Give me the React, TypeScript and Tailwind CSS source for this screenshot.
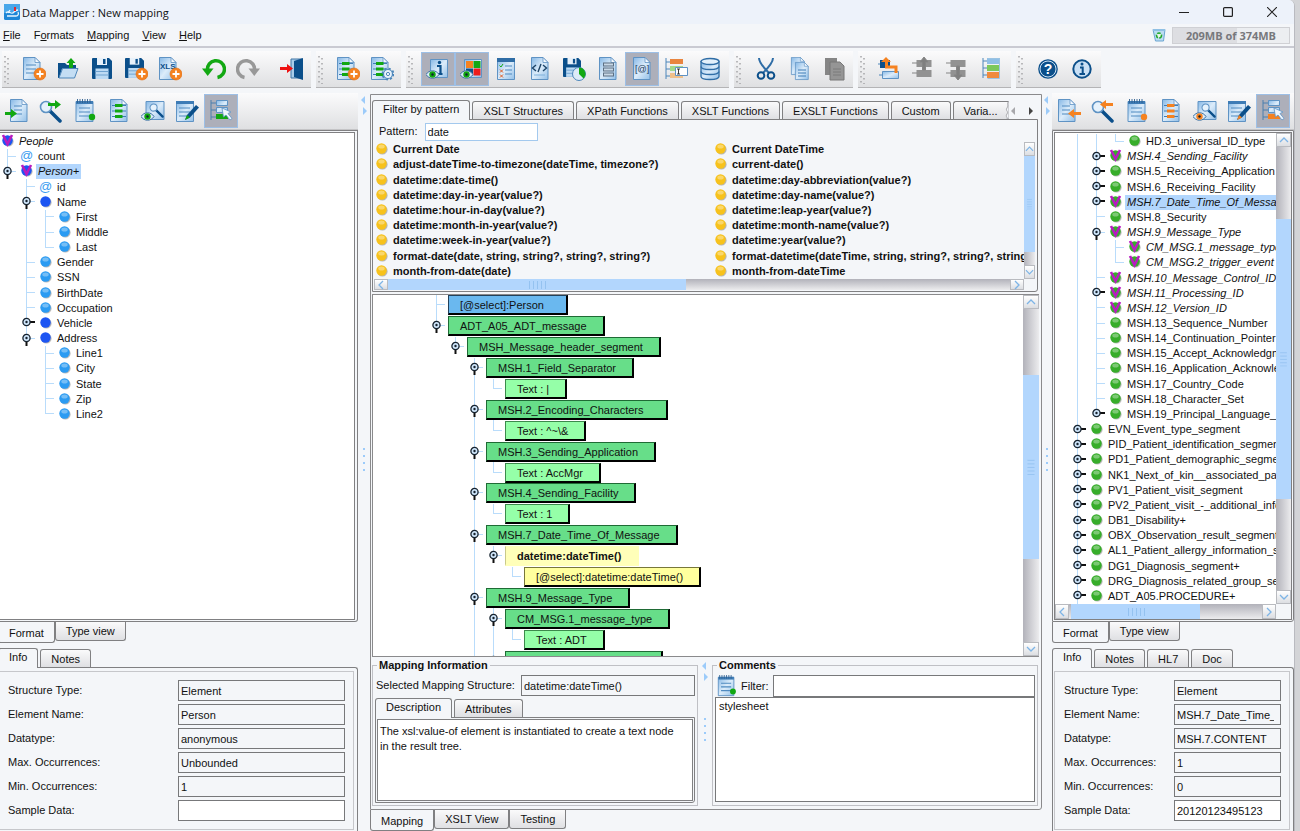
import React, { useState } from 'react';
import clsx from 'clsx';

const GREEN = '#12a812';
const ORANGE = '#f58220';
const NAVY = '#0b4f8a';

/* ---------- icon parts, all drawn on a 24x24 board ---------- */

const Sheet = ({ x = 1, y = 0 }: { x?: number; y?: number }) => (
  <g transform={`translate(${x} ${y})`}>
    <path d="M.5 .5H12l5 5V22.500H.5z" fill="url(#sheet)" stroke="#5f93c4" />
    <path d="M12 .5v5h5z" fill="#f4f9fe" stroke="#5f93c4" strokeWidth=".8" />
  </g>
);

const Lines = ({ x = 4, w = 10, from = 8 }: { x?: number; w?: number; from?: number }) => (
  <path d={`M${x} ${from}h${w}M${x} ${from + 4}h${w}M${x} ${from + 8}h${w}`} stroke="#4f8ac0" strokeWidth="1.200" />
);

const Plus = () => (
  <g>
    <circle cx="18" cy="17" r="6" fill={ORANGE} stroke="#e06c10" strokeWidth=".6" />
    <path d="M18 13.500v7M14.500 17h7" stroke="#fff" strokeWidth="1.800" />
  </g>
);

const Floppy = ({ x = 2, s = 1 }: { x?: number; s?: number }) => (
  <g transform={`translate(${x} 1) scale(${s})`}>
    <path d="M0 1a1 1 0 0 1 1-1h16l3 3v17a1 1 0 0 1-1 1H1a1 1 0 0 1-1-1z" fill={NAVY} />
    <path d="M5 0h10v7H5z" fill="#e8f2fb" />
    <path d="M11 1h2.500v5H11z" fill={NAVY} />
    <path d="M3.500 10.500h13V21h-13z" fill="#bcdaf3" />
    <path d="M3.500 13.500h13M3.500 17h13" stroke="#6fa3d0" />
  </g>
);

const Bars = ({ color }: { color: string }) => (
  <g>
    <path d="M3 6.500h14M3 12h14M3 17.500h14" stroke="#3e7cb6" strokeWidth="1" />
    <path d="M6 6.500h7.500M6 12h7.500M6 17.500h7.500" stroke={color} strokeWidth="3.200" />
  </g>
);

const Eye = ({ color }: { color: string }) => (
  <g>
    <path d="M0 17.500c3-5 10-5 13 0-3 5-10 5-13 0z" fill="#dcebf8" stroke="#3f74a5" />
    <circle cx="6.500" cy="17.500" r="3.200" fill={color} />
    <circle cx="6.500" cy="17.500" r="1.200" fill="#123" />
  </g>
);

const Pad = () => (
  <g>
    <path d="M3 2.500h17V22.500H3z" fill="url(#sheet)" stroke="#5f93c4" />
    <path d="M3 2h17v3H3z" fill="#3e7cb6" />
    <path d="M4.500 0v4M7 0v4M9.500 0v4M12 0v4M14.500 0v4M17 0v4" stroke="#2d5f8f" strokeWidth=".9" />
  </g>
);

const Lens = ({ x = 0, y = 0, s = 1 }: { x?: number; y?: number; s?: number }) => (
  <g transform={`translate(${x} ${y}) scale(${s})`}>
    <path d="M10.500 10.500L21 21" stroke={NAVY} strokeWidth="3.500" strokeLinecap="round" />
    <circle cx="7" cy="7" r="5.500" fill="#e6f2fc" stroke="#5f93c4" strokeWidth="1.600" />
  </g>
);

const Gear = () => (
  <g>
    <circle cx="18" cy="17" r="5.500" fill="none" stroke="#4c86ba" strokeWidth="1.800" strokeDasharray="2.200 2.100" />
    <circle cx="18" cy="17" r="4.500" fill="#e8f2fb" stroke="#4c86ba" strokeWidth="1.200" />
    <circle cx="18" cy="17" r="1.600" fill="#fff" stroke="#4c86ba" />
  </g>
);

const RightArrow = ({ x, y, color }: { x: number; y: number; color: string }) => (
  <path transform={`translate(${x} ${y})`} d="M0 3h7V0l6 4.500L7 9V6H0z" fill={color} />
);

const LeftArrow = ({ x, y, color }: { x: number; y: number; color: string }) => (
  <path transform={`translate(${x} ${y})`} d="M13 3H6V0L0 4.500 6 9V6h7z" fill={color} />
);

const sideIcons = (c: string, incoming: boolean): Record<string, React.ReactNode> => ({
  'Load format': incoming
    ? <><Sheet x={5} /><Lines x={9} w={8} from={7} /><RightArrow x={-1} y={10} color={c} /></>
    : <><Sheet x={1} /><Lines x={5} w={8} from={7} /><LeftArrow x={11} y={10} color={c} /></>,
  'Find node': <><Lens x={0} y={1} />{incoming ? <RightArrow x={9} y={1} color={c} /> : <LeftArrow x={9} y={1} color={c} />}</>,
  Comments: <><Pad /><Lines x={6} w={11} from={9} /><circle cx="19" cy="18" r="3.200" fill={c} /></>,
  'Mapped nodes': <><Sheet x={3} /><g transform="translate(2 0)"><Bars color={c} /></g></>,
  Preview: <><path d="M5 2.500h18v18H5z" fill="url(#sheet)" stroke="#5f93c4" /><Lens x={8} y={4} s={0.65} /><Eye color={c} /></>,
  'Edit format': <><path d="M1.500 2.500h17v20h-17z" fill="url(#sheet)" stroke="#5f93c4" /><path d="M1 2h18v3H1z" fill="#3e7cb6" /><Lines x={4} w={11} from={9} /><path d="M12 16L21 6l3 2.500-9 10-5 2.500z" fill={NAVY} /><path d="M12 16l3 2.500-5 2.500z" fill={c} /></>,
  'Select in tree': <><path d="M2 1v20M2 4h6M2 11h6M2 18h6" stroke="#4a7fae" fill="none" /><path d="M7.500 1.500h11v5h-11zM7.500 8.500h11v5h-11z" fill="url(#sheet)" stroke="#5f93c4" /><path d="M7 15h12v5H7z" fill={c} /><path d="M13 9l9 4-3 1.500 4 5-2 1.500-4-5-2.500 2z" fill="#eef6fd" stroke="#5f93c4" strokeWidth=".8" /></>,
});

const ICONS: Record<string, React.ReactNode> = {
  New: <><Sheet /><Lines /><Plus /></>,
  Open: <><path d="M2 6h7l2 2h9v4H6L3 21H2z" fill={NAVY} /><path d="M6.500 11.500H22L18.500 21H3z" fill="#c4def4" stroke="#4c86ba" /><path d="M15 1l4.500 5H17v5h-4V6h-2.500z" fill={GREEN} /></>,
  Save: <Floppy />,
  'Save as': <><Floppy x={1} s={0.95} /><Plus /></>,
  'Export XLS': <><Sheet /><text x="2" y="12" fontSize="8" fontWeight="700" fill={NAVY} fontFamily="Liberation Sans, sans-serif">XLS</text><Plus /></>,
  Undo: <><path d="M5.500 13a8.500 8.500 0 1 1 10 7.500" fill="none" stroke={GREEN} strokeWidth="3.500" /><path d="M0 11.500h11.500L5.700 19z" fill={GREEN} /></>,
  Redo: <><path d="M18.500 13a8.500 8.500 0 1 0-10 7.500" fill="none" stroke="#989898" strokeWidth="3.500" /><path d="M24 11.500H12.500L18.300 19z" fill="#989898" /></>,
  Exit: <><path d="M11 2h11v19H11z" fill="#a9cdea" stroke="#3f74a5" /><path d="M14 4l9-3v22l-9-3z" fill={NAVY} /><RightArrow x={0} y={7} color="#ee1111" /></>,
  'Add mapping': <><Sheet /><Bars color={GREEN} /><Plus /></>,
  'Mapping settings': <><Sheet /><Bars color={GREEN} /><Gear /></>,
  'Show info': <><path d="M4.500 2.500h17v18h-17z" fill="url(#sheet)" stroke="#5f93c4" /><path d="M11 9h3.500v8M10 17h6.500" stroke={NAVY} strokeWidth="2.200" fill="none" /><circle cx="13.500" cy="5.500" r="1.700" fill={NAVY} /><Eye color={GREEN} /></>,
  'Show colours': <><path d="M4.500 2.500h17v18h-17z" fill="url(#sheet)" stroke="#5f93c4" /><path d="M6 4h7v7H6z" fill={ORANGE} /><path d="M13.500 4h7v7h-7z" fill={GREEN} /><path d="M6 11.500h7v7H6z" fill={NAVY} /><path d="M13.500 11.500h7v7h-7z" fill="#ee1c1c" /><Eye color={GREEN} /></>,
  Checklist: <><path d="M3.500 1.500h17v21h-17z" fill="url(#sheet)" stroke="#5f93c4" /><path d="M3 1h18v4H3z" fill="#2f6da6" /><path d="M5.500 8.500l1.500 1.500 2-3" stroke={GREEN} fill="none" /><path d="M6 12.500l3 3m0-3l-3 3M6 17.500l3 3m0-3l-3 3" stroke="#e05a20" /><Lines x={11} w={7} from={9} /></>,
  'XML source': <><Sheet x={3} /><path d="M8 8l-3.500 3L8 14M15 8l3.500 3L15 14M13 7l-3 8" fill="none" stroke="#1d4468" strokeWidth="1.400" /><path d="M6 18h11" stroke="#7fb0da" /></>,
  'Auto save': <><Floppy x={1} s={0.9} /><circle cx="17" cy="17" r="6.500" fill="#dcebf8" stroke="#4c86ba" /><path d="M17 17V10.500a6.500 6.500 0 0 1 4.600 11z" fill={GREEN} /></>,
  'Form view': <><Sheet x={3} /><path d="M7 7.500h11M7 12.500h11M7 17.500h11" stroke="#5c6f82" strokeWidth="4" /><path d="M8 7.500h9M8 12.500h9M8 17.500h9" stroke="#c8d8e6" strokeWidth="2" /></>,
  Attributes: <><Sheet x={3} /><text x="5" y="15" fontSize="9" fill="#1d3c5c" fontFamily="Liberation Sans, sans-serif">[@]</text></>,
  Rename: <><path d="M2 1v21M2 5h5M2 12h5M2 19h5" stroke="#4c86ba" fill="none" /><path d="M6 2h13v5H6z" fill="#e9853f" /><path d="M6 9h13v5H6z" fill="#a4d98c" /><path d="M6 16h13v5H6z" fill="#f0c08a" /><path d="M11.500 10.500h12v8h-12z" fill="#fff" stroke="#5f93c4" /><path d="M13 12h3m-3 5h3m-1.500-5v5" stroke="#222" strokeWidth=".9" /></>,
  Database: <><path d="M3 4.500v15c0 4 18 4 18 0v-15z" fill="url(#sheet)" stroke="#2f6da6" strokeWidth="1.300" /><ellipse cx="12" cy="4.500" rx="9" ry="3" fill="#e3f0fb" stroke="#2f6da6" strokeWidth="1.300" /><path d="M3 9.500c0 4 18 4 18 0M3 14.500c0 4 18 4 18 0" fill="none" stroke="#2f6da6" strokeWidth="1.300" /></>,
  Cut: <><path d="M5 1c0 4 4 9 10 15M19 1c0 4-4 9-10 15" stroke="#2f6da6" strokeWidth="2" fill="none" /><circle cx="7" cy="18.500" r="3.300" fill="none" stroke={NAVY} strokeWidth="2" /><circle cx="17" cy="18.500" r="3.300" fill="none" stroke={NAVY} strokeWidth="2" /></>,
  Copy: <><g transform="translate(3 0) scale(.78)"><Sheet x={0} /></g><g transform="translate(7 5) scale(.78)"><Sheet x={0} /></g><path d="M10 13h8M10 16h8M10 19h8" stroke="#3e7cb6" /></>,
  Paste: <><path d="M3 1h12v17H3z" fill="#858585" /><path d="M8 5h10l4 4v14H8z" fill="#959595" stroke="#777" /><path d="M11 12h8M11 15h8M11 18h8" stroke="#7b7b7b" /></>,
  'Move out': <><path d="M2 3h10v8H2z" fill={NAVY} /><path d="M4.500 14.500h16v7h-16z" fill="url(#sheet)" stroke="#5f93c4" /><path d="M0 7h2M1 18h3.500" stroke="#4c86ba" /><path d="M8 0l5 5h-3v3.500h9.500V16h-3v-4.500H7V5H3z" fill={ORANGE} /></>,
  'Move up': <><path d="M4.500 3h15v7h-15zM4.500 13h15v7h-15z" fill="#929292" /><path d="M12 0l4 5h-2.500v8h-3V5H8zM0 6h5M0 16h5" fill="#7f7f7f" stroke="#858585" /></>,
  'Move down': <><path d="M4.500 3h15v7h-15zM4.500 13h15v7h-15z" fill="#929292" /><path d="M12 23l4-5h-2.500V9h-3v9H8zM0 6h5M0 16h5" fill="#7f7f7f" stroke="#858585" /></>,
  'Tree colours': <><path d="M3 1v20M3 4h5M3 11h5M3 18h5" stroke="#4c86ba" fill="none" /><path d="M7 1h13v6H7z" fill="#8fbfe6" /><path d="M7 8h13v6H7z" fill="#7cc85c" /><path d="M7 15h13v6H7z" fill="#f08a3c" /><path d="M7.500 1.500h12v20h-12" fill="none" stroke="#9cc3e2" /></>,
  Help: <><circle cx="12" cy="12" r="9.800" fill={NAVY} /><circle cx="12" cy="12" r="8" fill="none" stroke="#cfe3f5" /><text x="12" y="17" textAnchor="middle" fontSize="14" fontWeight="700" fill="#fff" fontFamily="Liberation Sans, sans-serif">?</text></>,
  About: <><circle cx="12" cy="12" r="8.700" fill="#c9e0f5" stroke={NAVY} strokeWidth="2" /><path d="M10 10.500h2.700V17M9.500 17h5.500" stroke={NAVY} strokeWidth="2" fill="none" /><circle cx="12" cy="7" r="1.500" fill={NAVY} /></>,
};

const TOOLBARS: { items: string[]; pressed?: string[] }[] = [
  { items: ['New', 'Open', 'Save', 'Save as', 'Export XLS', '-', 'Undo', 'Redo', '-', 'Exit'] },
  { items: ['Add mapping', 'Mapping settings'] },
  {
    items: ['Show info', 'Show colours', 'Checklist', 'XML source', 'Auto save', 'Form view', 'Attributes', 'Rename', 'Database'],
    pressed: ['Show info', 'Show colours', 'Attributes'],
  },
  { items: ['Cut', 'Copy', 'Paste'] },
  { items: ['Move out', 'Move up', 'Move down', 'Tree colours'] },
  { items: ['Help', 'About'] },
];

function ToolButton({ label, icon, pressed }: { label: string; icon: React.ReactNode; pressed?: boolean }) {
  return (
    <button
      aria-label={label}
      className={clsx('w-[34px] h-[34px] shrink-0 flex items-center justify-center border', pressed ? 'bg-[#adafba] border-[#9dbfe6]' : 'border-transparent')}
    >
      <svg viewBox="0 0 24 24" className="w-6 h-6">{icon}</svg>
    </button>
  );
}

function MainToolbars() {
  return (
    <div className="flex gap-[5px] pl-0.5 pt-[3px] pb-1">
      {TOOLBARS.map((bar, i) => (
        <div key={i} className="flex py-px pr-0.5 border-b border-[#b4b4b6] bg-linear-to-b from-[#fbfbfc] to-[#dfe0e2]">
          <svg viewBox="0 0 15 34" className="w-[15px] h-[34px]">
            <path d="M3 4v28M6 6v26" stroke="#a5a5a8" strokeWidth="1.500" strokeDasharray="1.500 3.500" />
          </svg>
          {bar.items.map((name, n) =>
            name === '-' ? <span key={n} className="w-2.5" /> : <ToolButton key={n} label={name} icon={ICONS[name]} pressed={bar.pressed?.includes(name)} />
          )}
        </div>
      ))}
    </div>
  );
}

function SideToolbar({ color, incoming }: { color: string; incoming: boolean }) {
  return (
    <div className="flex shrink-0 py-px border-b border-[#c4c4c6] overflow-hidden bg-linear-to-b from-[#fbfbfc] to-[#dfe0e2]">
      {Object.entries(sideIcons(color, incoming)).map(([name, icon]) => (
        <ToolButton key={name} label={name} icon={icon} pressed={name === 'Select in tree'} />
      ))}
    </div>
  );
}

/* ---------- trees ---------- */

// One guide character per indent level: | passes through, + branches, L ends, blank is empty.
type Handle = 'open' | 'closed' | null;
type Kind = 'attr' | 'blue' | 'leaf' | 'green' | 'markBlue' | 'markGreen';
type TreeRow = { guides: string; handle?: Handle; kind: Kind; label: string; selected?: boolean };

function HandleIcon({ state }: { state: Handle }) {
  return (
    <svg viewBox="0 0 19 14" className="absolute left-0 inset-y-0 my-auto w-[19px] h-3.5">
      <path d={state === 'open' ? 'M9.500 8v6' : 'M12 6h6'} stroke="#111" strokeWidth="2" />
      <circle cx="9.500" cy="6" r="3.600" fill="#cfe6fb" stroke="#16222e" strokeWidth="1.300" />
      <circle cx="9.500" cy="6" r="1.200" fill="#16222e" />
    </svg>
  );
}

function Guides({ guides, handle }: { guides: string; handle?: Handle }) {
  return (
    <>
      {guides.split('').map((g, i) => (
        <span key={i} className="relative w-[19px] shrink-0 self-stretch">
          {g !== ' ' && <span className={clsx('absolute left-[9px] top-0 w-px bg-[#b9dcfb]', g === 'L' ? 'h-1/2' : 'h-full')} />}
          {(g === '+' || g === 'L') && <span className="absolute left-[9px] top-[calc(50%-1px)] h-px w-[9px] bg-[#b9dcfb]" />}
          {handle && i === guides.length - 1 && <HandleIcon state={handle} />}
        </span>
      ))}
    </>
  );
}

const BALL: Record<string, string> = { blue: '#1d55f2', leaf: '#2b9bf2', green: '#37ad2a', gold: '#f7c21c' };

function Ball({ color, shine = true }: { color: string; shine?: boolean }) {
  return (
    <g>
      <circle cx="7.400" cy="7.400" r="5.200" fill="#8c8c8c" opacity=".6" />
      <circle cx="6.500" cy="6.500" r="5.200" fill={color} />
      {shine && <ellipse cx="6.500" cy="4.500" rx="3.200" ry="2" fill="#fff" opacity=".35" />}
    </g>
  );
}

function NodeIcon({ kind }: { kind: Kind }) {
  if (kind === 'attr') {
    return <span aria-hidden="true" className="w-[19px] shrink-0 text-center text-[13px] leading-[13px] text-[#3b9cf0] mb-0.5">@</span>;
  }
  const marked = kind === 'markBlue' || kind === 'markGreen';
  return (
    <svg viewBox="0 0 13 13" className="w-[13px] h-[13px] mx-[3px] shrink-0 mb-0.5">
      <Ball color={kind === 'markBlue' ? BALL.blue : kind === 'markGreen' ? BALL.green : BALL[kind]} shine={kind !== 'blue' && !marked} />
      {marked && <path d="M2 1l4.500 9L11 1" fill="none" stroke="#b81cc0" strokeWidth="2.600" />}
    </svg>
  );
}

function Tree({ rows, className }: { rows: TreeRow[]; className: string }) {
  return (
    <ul className={clsx('grid auto-rows-fr', className)}>
      {rows.map((row, i) => (
        <li key={i} className="flex items-center whitespace-nowrap">
          <Guides guides={row.guides} handle={row.handle} />
          <NodeIcon kind={row.kind} />
          <span className={clsx('px-0.5 leading-[15px]', row.kind.startsWith('mark') && 'italic', row.selected && 'bg-[#b2d6fd]')}>{row.label}</span>
        </li>
      ))}
    </ul>
  );
}

const SOURCE: TreeRow[] = [
  { guides: '', kind: 'markBlue', label: 'People' },
  { guides: '+', kind: 'attr', label: 'count' },
  { guides: 'L', handle: 'open', kind: 'markBlue', label: 'Person+', selected: true },
  { guides: ' +', kind: 'attr', label: 'id' },
  { guides: ' +', handle: 'open', kind: 'blue', label: 'Name' },
  { guides: ' |+', kind: 'leaf', label: 'First' },
  { guides: ' |+', kind: 'leaf', label: 'Middle' },
  { guides: ' |L', kind: 'leaf', label: 'Last' },
  { guides: ' +', kind: 'leaf', label: 'Gender' },
  { guides: ' +', kind: 'leaf', label: 'SSN' },
  { guides: ' +', kind: 'leaf', label: 'BirthDate' },
  { guides: ' +', kind: 'leaf', label: 'Occupation' },
  { guides: ' +', handle: 'closed', kind: 'blue', label: 'Vehicle' },
  { guides: ' L', handle: 'open', kind: 'blue', label: 'Address' },
  { guides: '  +', kind: 'leaf', label: 'Line1' },
  { guides: '  +', kind: 'leaf', label: 'City' },
  { guides: '  +', kind: 'leaf', label: 'State' },
  { guides: '  +', kind: 'leaf', label: 'Zip' },
  { guides: '  L', kind: 'leaf', label: 'Line2' },
];

const segment = (label: string): TreeRow => ({ guides: '+', handle: 'closed', kind: 'green', label });

const TARGET: TreeRow[] = [
  { guides: '||L', kind: 'green', label: 'HD.3_universal_ID_type' },
  { guides: '|+', handle: 'closed', kind: 'markGreen', label: 'MSH.4_Sending_Facility' },
  { guides: '|+', handle: 'closed', kind: 'green', label: 'MSH.5_Receiving_Application' },
  { guides: '|+', handle: 'closed', kind: 'green', label: 'MSH.6_Receiving_Facility' },
  { guides: '|+', handle: 'closed', kind: 'markGreen', label: 'MSH.7_Date_Time_Of_Message', selected: true },
  { guides: '|+', kind: 'green', label: 'MSH.8_Security' },
  { guides: '|+', handle: 'open', kind: 'markGreen', label: 'MSH.9_Message_Type' },
  { guides: '||+', kind: 'markGreen', label: 'CM_MSG.1_message_type' },
  { guides: '||L', kind: 'markGreen', label: 'CM_MSG.2_trigger_event' },
  { guides: '|+', kind: 'markGreen', label: 'MSH.10_Message_Control_ID' },
  { guides: '|+', handle: 'closed', kind: 'markGreen', label: 'MSH.11_Processing_ID' },
  { guides: '|+', kind: 'markGreen', label: 'MSH.12_Version_ID' },
  { guides: '|+', kind: 'green', label: 'MSH.13_Sequence_Number' },
  { guides: '|+', kind: 'green', label: 'MSH.14_Continuation_Pointer' },
  { guides: '|+', kind: 'green', label: 'MSH.15_Accept_Acknowledgment' },
  { guides: '|+', kind: 'green', label: 'MSH.16_Application_Acknowledgment' },
  { guides: '|+', kind: 'green', label: 'MSH.17_Country_Code' },
  { guides: '|+', kind: 'green', label: 'MSH.18_Character_Set' },
  { guides: '|L', handle: 'closed', kind: 'green', label: 'MSH.19_Principal_Language_Of_Message' },
  segment('EVN_Event_type_segment'),
  segment('PID_Patient_identification_segment'),
  segment('PD1_Patient_demographic_segment'),
  segment('NK1_Next_of_kin__associated_parties'),
  segment('PV1_Patient_visit_segment'),
  segment('PV2_Patient_visit_-_additional_info'),
  segment('DB1_Disability+'),
  segment('OBX_Observation_result_segment'),
  segment('AL1_Patient_allergy_information_segment'),
  segment('DG1_Diagnosis_segment+'),
  segment('DRG_Diagnosis_related_group_segment'),
  segment('ADT_A05.PROCEDURE+'),
];

/* ---------- mapping canvas ---------- */

type BoxTone = 'select' | 'element' | 'text' | 'value' | 'valueSelect';
type MapRow = { guides: string; handle?: Handle; tone: BoxTone; label: string; wide?: boolean };

const TONES: Record<BoxTone, string> = {
  select: 'bg-[#6ab8ef] border-[#23415a] border-r-black border-b-black',
  element: 'bg-[#67de89] border-[#1f6b35] border-r-black border-b-black',
  text: 'bg-[#95ffa8] border-[#3c8a4c] border-r-black border-b-black',
  value: 'bg-[#ffffb9] border-transparent border-l-[#c9c98a] font-bold',
  valueSelect: 'bg-[#ffff9e] border-[#77773a] border-r-black border-b-black',
};

const MAPPING: MapRow[] = [
  { guides: '+', tone: 'select', label: '[@select]:Person', wide: true },
  { guides: 'L', handle: 'open', tone: 'element', label: 'ADT_A05_ADT_message' },
  { guides: ' L', handle: 'open', tone: 'element', label: 'MSH_Message_header_segment' },
  { guides: '  +', handle: 'open', tone: 'element', label: 'MSH.1_Field_Separator' },
  { guides: '  |L', tone: 'text', label: 'Text : |' },
  { guides: '  +', handle: 'open', tone: 'element', label: 'MSH.2_Encoding_Characters', wide: true },
  { guides: '  |L', tone: 'text', label: 'Text : ^~\\&' },
  { guides: '  +', handle: 'open', tone: 'element', label: 'MSH.3_Sending_Application' },
  { guides: '  |L', tone: 'text', label: 'Text : AccMgr' },
  { guides: '  +', handle: 'open', tone: 'element', label: 'MSH.4_Sending_Facility' },
  { guides: '  |L', tone: 'text', label: 'Text : 1' },
  { guides: '  +', handle: 'open', tone: 'element', label: 'MSH.7_Date_Time_Of_Message' },
  { guides: '  |L', handle: 'open', tone: 'value', label: 'datetime:dateTime()' },
  { guides: '  | L', tone: 'valueSelect', label: '[@select]:datetime:dateTime()' },
  { guides: '  +', handle: 'open', tone: 'element', label: 'MSH.9_Message_Type' },
  { guides: '  |+', handle: 'open', tone: 'element', label: 'CM_MSG.1_message_type' },
  { guides: '  ||L', tone: 'text', label: 'Text : ADT' },
  { guides: '  |+', handle: 'open', tone: 'element', label: '' },
];

function MappingCanvas() {
  return (
    <div className="flex flex-1 min-h-0 bg-white border-t border-l border-b border-[#8a8a8c] mr-0.5">
      <div className="flex-1 min-w-0 overflow-hidden pl-[54px]">
        <ul className="grid auto-rows-fr h-94">
          {MAPPING.map((row, i) => (
            <li key={i} className="flex items-center whitespace-nowrap">
              <Guides guides={row.guides} handle={row.handle} />
              <span
                className={clsx(
                  'ml-0.5 h-5 leading-[19px] border border-r-2 border-b-2 pl-[11px]',
                  row.wide ? 'pr-[22px]' : 'pr-4',
                  !row.label && 'w-[158px]',
                  TONES[row.tone]
                )}
              >
                {row.label}
              </span>
            </li>
          ))}
        </ul>
      </div>
      <ScrollBar className="w-4" before={66} thumb={185} after={84} />
    </div>
  );
}

/* ---------- shared widgets ---------- */

type ScrollProps = { horizontal?: boolean; className: string; before: number; thumb: number; after: number };

function ScrollBar({ horizontal, className, before, thumb, after }: ScrollProps) {
  const button = clsx('shrink-0 flex items-center justify-center border border-[#b9bbc0] bg-linear-to-b from-white to-[#dcdee2]', horizontal ? 'w-3.5' : 'h-3.5');
  const track = clsx('basis-0', horizontal ? 'bg-linear-to-b from-[#b2b2ba] to-[#ececee]' : 'bg-linear-to-r from-[#b2b2ba] to-[#ececee]');
  return (
    <div className={clsx('flex shrink-0', !horizontal && 'flex-col', className)}>
      <button aria-label="Scroll back" className={button}>
        <svg viewBox="0 0 10 10" className="w-2.5 h-2.5"><path d={horizontal ? 'M7 1L3 5l4 4' : 'M1 7l4-4 4 4'} fill="none" stroke="#7db4e6" strokeWidth="1.300" /></svg>
      </button>
      <div className={track} style={{ flexGrow: before }} />
      <div className="basis-0 bg-[#b2d6fd] flex items-center justify-center" style={{ flexGrow: thumb }}>
        <svg viewBox="0 0 18 8" className={clsx('w-[18px] h-2', !horizontal && 'rotate-90')}><path d="M1.500 0v8M5.500 0v8M9.500 0v8M13.500 0v8M17.500 0v8" stroke="#94c2f0" /></svg>
      </div>
      <div className={track} style={{ flexGrow: after }} />
      <button aria-label="Scroll forward" className={button}>
        <svg viewBox="0 0 10 10" className="w-2.5 h-2.5"><path d={horizontal ? 'M3 1l4 4-4 4' : 'M1 3l4 4 4-4'} fill="none" stroke="#7db4e6" strokeWidth="1.300" /></svg>
      </button>
    </div>
  );
}

type TabsProps = { tabs: string[]; bottom?: boolean; torn?: boolean; className?: string; children?: React.ReactNode };

function Tabs({ tabs, bottom, torn, className, children }: TabsProps) {
  const [active, setActive] = useState(tabs[0]);
  return (
    <div role="tablist" className={clsx('flex shrink-0 relative z-10', bottom ? 'items-start' : 'items-end gap-0.5', className)}>
      {tabs.map((tab, i) => (
        <button
          key={tab}
          role="tab"
          aria-selected={tab === active}
          onClick={() => setActive(tab)}
          className={clsx(
            'relative px-2.5 border border-[#808082] whitespace-nowrap',
            bottom ? 'rounded-b-[3px] border-t-0' : 'rounded-t-[3px] border-b-0',
            tab === active && 'bg-[#f4f6f9]',
            tab !== active && 'bg-linear-to-b from-[#fafafb] to-[#dfe0e3]',
            tab === active && (bottom ? 'h-[21px] pt-0.5' : 'h-5 -mb-px pb-0.5'),
            tab !== active && (bottom ? 'h-[19px]' : 'h-[18px] pt-0.5'),
            torn && i === tabs.length - 1 && 'border-r-0 rounded-tr-none'
          )}
        >
          {tab}
          {torn && i === tabs.length - 1 && (
            <svg viewBox="0 0 4 18" className="absolute -right-px -top-px w-1 h-[18px]"><path d="M4 0C1 3 4 4 2 7s2 3 0 6 1 3 0 5h2z" fill="#f4f6f9" stroke="#9a9a9e" strokeWidth=".8" /></svg>
          )}
        </button>
      ))}
      {children}
    </div>
  );
}

function Splitter({ className }: { className: string }) {
  return (
    <div className={clsx('shrink-0 relative flex flex-col items-center', className)}>
      <svg viewBox="0 0 8 20" className="w-2 h-5 mt-1"><path d="M5 0v8L1 4zM3 11v8l4-4z" fill="#9ccbfa" /></svg>
      <svg viewBox="0 0 4 30" className="absolute inset-y-0 my-auto w-1 h-[30px]"><path d="M2 1v28" stroke="#9ccbfa" strokeWidth="2" strokeDasharray="2 5" /></svg>
    </div>
  );
}

function InfoForm({ id, values, className }: { id: string; values: string[]; className: string }) {
  const labels = ['Structure Type:', 'Element Name:', 'Datatype:', 'Max. Occurrences:', 'Min. Occurrences:', 'Sample Data:'];
  return (
    <form className={clsx('flex flex-col gap-[3px] border border-[#c6c7cb] pt-2 pb-2', className)}>
      {labels.map((label, i) => (
        <div key={label} className="flex items-center">
          <label htmlFor={`${id}-${i}`} className={clsx('shrink-0', id === 'source' ? 'w-[170px]' : 'w-[110px]')}>{label}</label>
          <input
            id={`${id}-${i}`}
            readOnly={i < 5}
            defaultValue={values[i]}
            className={clsx('flex-1 min-w-0 h-[21px] border border-[#77787a] pl-0.5 pr-1.5 outline-none', i < 5 ? 'bg-[#f4f6f9]' : 'bg-white')}
          />
        </div>
      ))}
    </form>
  );
}

/* ---------- function palette ---------- */

const FUNCTIONS = [
  'Current Date', 'Current DateTime',
  'adjust-dateTime-to-timezone(dateTime, timezone?)', 'current-date()',
  'datetime:date-time()', 'datetime:day-abbreviation(value?)',
  'datetime:day-in-year(value?)', 'datetime:day-name(value?)',
  'datetime:hour-in-day(value?)', 'datetime:leap-year(value?)',
  'datetime:month-in-year(value?)', 'datetime:month-name(value?)',
  'datetime:week-in-year(value?)', 'datetime:year(value?)',
  'format-date(date, string, string?, string?, string?)', 'format-datetime(dateTime, string, string?, string?, string?)',
  'month-from-date(date)', 'month-from-dateTime',
];

function FunctionPalette() {
  return (
    <div className="shrink-0 pt-[5px] mr-[3px]">
      <Tabs torn tabs={['Filter by pattern', 'XSLT Structures', 'XPath Functions', 'XSLT Functions', 'EXSLT Functions', 'Custom', 'Varia...']}>
        <button aria-label="Previous tabs" className="ml-auto h-4 w-4 flex items-center"><svg viewBox="0 0 6 8" className="w-1.5 h-2"><path d="M5 0v8L1 4z" fill="#a8a8ac" /></svg></button>
        <button aria-label="Next tabs" className="h-4 w-2.5 flex items-center"><svg viewBox="0 0 6 8" className="w-1.5 h-2"><path d="M1 0v8l4-4z" fill="#444" /></svg></button>
      </Tabs>
      <div className="border border-[#808082] rounded-br-[3px] p-px">
        <div className="flex items-center gap-[7px] pl-[5px] h-[21px]">
          <label htmlFor="pattern">Pattern:</label>
          <input id="pattern" defaultValue="date" className="w-[113px] h-[18px] border border-[#a3c9ee] bg-white px-0.5 outline-none" />
        </div>
        <div className="flex h-[137px]">
          <ul className="flex-1 min-w-0 overflow-hidden grid grid-cols-[339px_1fr] auto-rows-fr font-bold">
            {FUNCTIONS.map(fn => (
              <li key={fn} className="flex items-center gap-[5px] min-w-0 whitespace-nowrap pl-px">
                <svg viewBox="0 0 13 13" className="w-[13px] h-[13px] shrink-0 mb-0.5"><Ball color={BALL.gold} /></svg>
                <span className="leading-[15px]">{fn}</span>
              </li>
            ))}
          </ul>
          <ScrollBar className="w-[11px] mr-px" before={0} thumb={96} after={13} />
        </div>
        <ScrollBar horizontal className="h-[11px] mr-3" before={0} thumb={298} after={324} />
      </div>
    </div>
  );
}

function MappingInfo() {
  return (
    <div className="flex shrink-0 h-[152px] pt-px pb-[3px] mr-[3px]">
      <fieldset className="flex-1 min-w-0 border border-[#bfc0c5] px-0.5 pb-0.5">
        <legend className="font-bold leading-[15px] ml-0.5 px-0.5">Mapping Information</legend>
        <div className="flex flex-col h-full pt-0.5">
          <div className="flex items-center pl-px">
            <label htmlFor="structure" className="w-[145px] whitespace-nowrap">Selected Mapping Structure:</label>
            <input id="structure" readOnly defaultValue="datetime:dateTime()" className="flex-1 min-w-0 h-[21px] border border-[#77787a] bg-[#f4f6f9] px-0.5 outline-none" />
          </div>
          <Tabs tabs={['Description', 'Attributes']} className="mt-0.5" />
          <div className="flex flex-1 min-h-0 border border-[#808082] rounded-br-[3px] p-px">
            <textarea
              aria-label="Description"
              readOnly
              className="flex-1 resize-none border border-[#808082] bg-white pl-0.5 pr-4 py-1 leading-[15px] outline-none"
              defaultValue="The xsl:value-of element is instantiated to create a text node in the result tree."
            />
          </div>
        </div>
      </fieldset>
      <Splitter className="w-3.5" />
      <fieldset className="flex-1 min-w-0 border border-[#bfc0c5] px-0.5 pb-[3px]">
        <legend className="font-bold leading-[15px] ml-0.5 px-0.5">Comments</legend>
        <div className="flex flex-col h-full pt-0.5">
          <div className="flex items-center gap-1 pl-0.5">
            <svg viewBox="2 0 21 24" className="w-5 h-[22px]"><Pad /><Lines x={6} w={11} from={9} /><circle cx="19" cy="18" r="3.200" fill={GREEN} /></svg>
            <label htmlFor="comment-filter">Filter:</label>
            <input id="comment-filter" className="flex-1 min-w-0 h-[22px] border border-[#77787a] bg-white px-0.5 outline-none" />
          </div>
          <ul className="flex-1 min-h-0 border border-[#77787a] bg-white px-[3px] py-px">
            <li className="leading-[15px]">stylesheet</li>
          </ul>
        </div>
      </fieldset>
    </div>
  );
}

function TitleBar() {
  return (
    <header className="shrink-0 bg-[#edf2fa]">
      <div className="flex items-center h-6 pl-1">
        <svg viewBox="0 0 16 16" className="w-4 h-4 mr-[2px]">
          <rect width="16" height="16" rx="1.500" fill="#1f86d6" />
          <path d="M0 0h16v7L0 9z" fill="#49a7ea" />
          <path d="M2 9c3-4 5 3 8-1 1-1 2-2 4-2M3 12h9c2 0 3-2 2-4M6 6l-2 3" stroke="#eaf6ff" strokeWidth="1.300" fill="none" />
          <path d="M10 3h2v4h-2z" fill="#e3272c" />
        </svg>
        <h1 className="font-['Open_Sans',sans-serif] text-[11px]">Data Mapper : New mapping</h1>
        <div className="ml-auto flex">
          <button aria-label="Minimize" className="w-11 h-6 flex items-center justify-center"><svg viewBox="0 0 10 10" className="w-2.5 h-2.5"><path d="M0 5.500h10" stroke="#222" /></svg></button>
          <button aria-label="Maximize" className="w-11 h-6 flex items-center justify-center"><svg viewBox="0 0 10 10" className="w-2.5 h-2.5"><rect x=".6" y=".6" width="8.800" height="8.800" rx="1" fill="none" stroke="#222" strokeWidth="1.200" /></svg></button>
          <button aria-label="Close" className="w-11 h-6 flex items-center justify-center"><svg viewBox="0 0 10 10" className="w-2.5 h-2.5"><path d="M0 0l10 10M10 0L0 10" stroke="#222" strokeWidth="1.100" /></svg></button>
        </div>
      </div>
      <div className="flex items-center h-6 pl-[3px] pr-1 bg-[#f4f6f9] border-b-2 border-[#c9cad2]">
        <nav className="flex gap-[13px]">
          <button><u>F</u>ile</button>
          <button>F<u>o</u>rmats</button>
          <button><u>M</u>apping</button>
          <button><u>V</u>iew</button>
          <button><u>H</u>elp</button>
        </nav>
        <button aria-label="Collect garbage" className="ml-auto mr-1.5">
          <svg viewBox="0 0 14 14" className="w-3.5 h-3.5">
            <path d="M1 1.500h12L11.500 13h-8z" fill="#bcdcf2" stroke="#6aa5d2" />
            <path d="M1 1h12v2H1z" fill="#8fc0e4" />
            <circle cx="7" cy="7.500" r="2.500" fill="#eaf6ee" stroke="#23a82c" strokeWidth="1.600" strokeDasharray="3.600 1.200" />
          </svg>
        </button>
        <div className="w-[118px] h-[17px] border border-[#cfd0d4] bg-linear-to-r from-[#dddee2] from-55% to-[#eceef1] to-55% text-center font-bold leading-[15px] text-[#77787c] font-['Open_Sans',sans-serif]">209MB of 374MB</div>
      </div>
    </header>
  );
}

export default function App() {
  return (
    <div className="flex h-screen overflow-hidden bg-[#d3d4d7] font-['Liberation_Sans',Arial,sans-serif] text-[11px] leading-[15px] text-[#111]">
      <svg className="absolute w-0 h-0" aria-hidden="true">
        <defs>
          <linearGradient id="sheet" x1="0" y1="0" x2="1" y2="1">
            <stop offset="0" stopColor="#86b8e6" />
            <stop offset=".5" stopColor="#dcecfa" />
            <stop offset="1" stopColor="#93c0e8" />
          </linearGradient>
        </defs>
      </svg>
      <div className="flex flex-col flex-1 min-w-0 mr-[5px] bg-[#f4f6f9] rounded-tr-md border-r border-[#b9bac0] overflow-hidden">
        <TitleBar />
        <MainToolbars />
        <main className="flex flex-1 min-h-0">
          {/* Source format */}
          <section className="w-[358px] shrink-0 flex flex-col pt-px">
            <SideToolbar color={GREEN} incoming />
            <div className="flex-1 min-h-0 border border-l-0 border-[#808082] rounded-br-[3px] pt-px pb-px pr-0.5">
              <div className="h-full bg-white border border-l-0 border-[#808082] overflow-hidden pt-px">
                <div className="-ml-0.5 w-fit"><Tree rows={SOURCE} className="h-72" /></div>
              </div>
            </div>
            <Tabs bottom tabs={['Format', 'Type view']} className="-ml-0.5 h-[25px]" />
            <Tabs tabs={['Info', 'Notes']} className="-ml-0.5 h-5" />
            <div className="border-t border-r border-[#808082] rounded-tr-[3px] pt-[3px] pr-[3px] pb-px">
              <InfoForm id="source" values={['Element', 'Person', 'anonymous', 'Unbounded', '1', '']} className="border-l-0 pl-2 pr-2" />
            </div>
          </section>

          <Splitter className="w-3" />

          {/* Mapping */}
          <section className="flex-1 min-w-0 flex flex-col pt-0.5">
            <div className="flex-1 min-h-0 flex flex-col border border-[#8a8a8c] rounded-br-[3px] pl-px">
              <FunctionPalette />
              <div className="h-0.5 shrink-0" />
              <MappingCanvas />
              <MappingInfo />
            </div>
            <Tabs bottom tabs={['Mapping', 'XSLT View', 'Testing']} className="h-[21px]" />
          </section>

          <Splitter className="w-2.5" />

          {/* Target format */}
          <section className="w-[242px] shrink-0 flex flex-col pt-px">
            <SideToolbar color={ORANGE} incoming={false} />
            <div className="flex-1 min-h-0 border border-[#808082] rounded-br-[3px] p-px">
              <div className="h-full flex flex-col bg-white border border-[#808082]">
                <div className="flex flex-1 min-h-0">
                  <div className="flex-1 min-w-0 overflow-hidden pl-[13px] pt-px"><Tree rows={TARGET} className="h-full" /></div>
                  <ScrollBar className="w-[15px]" before={72} thumb={278} after={91} />
                </div>
                <div className="bg-[#f4f6f9]"><ScrollBar horizontal className="h-[15px] mr-[15px]" before={2} thumb={128} after={61} /></div>
              </div>
            </div>
            <Tabs bottom tabs={['Format', 'Type view']} className="h-[25px]" />
            <Tabs tabs={['Info', 'Notes', 'HL7', 'Doc']} className="h-5" />
            <div className="border-t border-x border-[#808082] rounded-tr-[3px] pt-[3px] pl-px pr-[3px] pb-px">
              <InfoForm id="target" values={['Element', 'MSH.7_Date_Time_Of_Message', 'MSH.7.CONTENT', '1', '0', '20120123495123']} className="pl-[9px] pr-2" />
            </div>
          </section>
        </main>
      </div>
    </div>
  );
}
